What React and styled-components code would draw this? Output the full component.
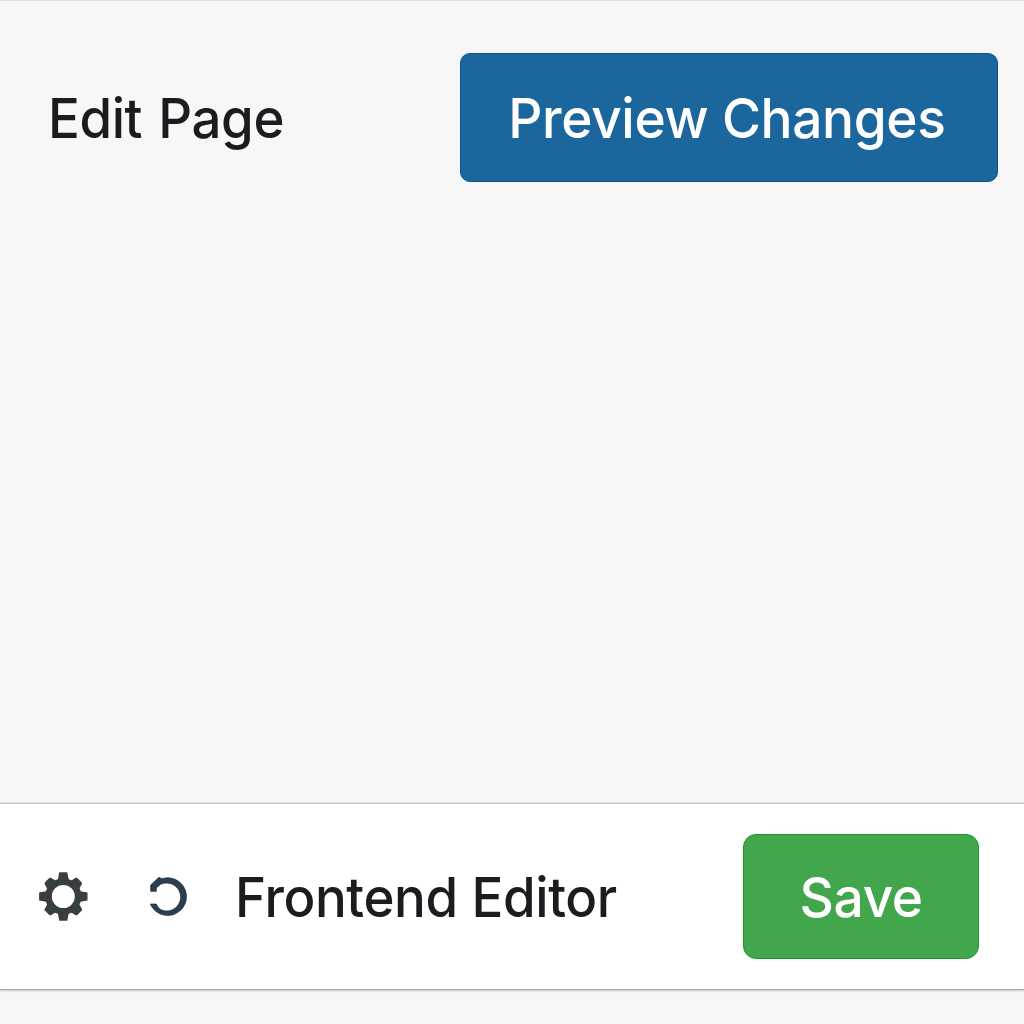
import React from 'react';
import styled, { createGlobalStyle } from 'styled-components';

const GlobalStyle = createGlobalStyle`
  * {
    box-sizing: border-box;
  }

  body {
    margin: 0;
    background: #f7f7f7;
    font-family: Inter, 'Liberation Sans', sans-serif;
  }
`;

const Page = styled.div`
  display: flex;
  flex-direction: column;
  height: 100vh;
  overflow: hidden;
  border-top: 1px solid #dedede;
  background: #f7f7f7;
`;

const Header = styled.header`
  display: flex;
  align-items: center;
  justify-content: space-between;
  height: 129px;
  margin-top: 52px;
  padding: 0 26px 0 48px;
`;

const Label = styled.span`
  display: block;
  flex: none;
  padding-top: 1px;
  font-size: 55.5px;
  font-weight: ${({ $weight }) => $weight || 450};
  line-height: 68px;
  letter-spacing: -0.4px;
  word-spacing: ${({ $gap }) => $gap || 0}px;
  white-space: nowrap;
  color: ${({ $color }) => $color || '#1b1c20'};
  transform: scaleX(${({ $stretch }) => $stretch || 0.95});
  transform-origin: ${({ $origin }) => $origin || 'left'} center;
`;

const Button = styled.button`
  display: flex;
  align-items: center;
  justify-content: center;
  flex: none;
  width: ${({ $width }) => $width}px;
  height: ${({ $height }) => $height}px;
  padding: 0 ${({ $inset }) => $inset || 0}px 0 0;
  border: 1px solid ${({ $border }) => $border};
  border-radius: ${({ $radius }) => $radius}px;
  background: ${({ $fill }) => $fill};
  font-family: inherit;
  cursor: pointer;
`;

const Canvas = styled.main`
  flex: 1;
`;

const Toolbar = styled.footer`
  display: flex;
  align-items: center;
  height: 187px;
  margin-bottom: 34px;
  padding: 0 45px 0 38px;
  border-top: 1px solid #c6c6c6;
  border-bottom: 1px solid #a9a9a9;
  background: #fff;
  box-shadow: 0 -1px 0 #e2e2e2, 0 1px 2px rgba(0, 0, 0, 0.2);
`;

const Icon = styled.svg`
  display: block;
  flex: none;
  margin-right: ${({ $gap }) => $gap}px;
`;

const Spacer = styled.div`
  flex: 1;
`;

const TEETH = [0, 45, 90, 135, 180, 225, 270, 315];

const GearIcon = () => (
  <Icon width="50" height="50" viewBox="-25.3 -24.5 50 50" $gap={61}>
    <circle r="14.8" fill="none" stroke="#383f43" strokeWidth="6.6" />
    {TEETH.map((angle) => (
      <path
        key={angle}
        d={angle % 90 ? 'M-6-16 -4.4-22 -3.4-23 3.4-23 4.4-22 6-16Z' : 'M-5.6-16 -4-24.2 4-24.2 5.6-16Z'}
        fill="#383f43"
        transform={`rotate(${angle})`}
      />
    ))}
  </Icon>
);

const ReloadIcon = () => (
  <Icon width="38" height="40" viewBox="45 36 114 120" $gap={48}>
    <path
      d="M50 79V60L75 37 84 41A56.5 56.5 0 1 1 49 117H67Q75 138 97 138A42 42 0 1 0 80 58L67 69V79Z"
      fill="#2c3e4e"
      stroke="#17273a"
      strokeWidth="2"
    />
  </Icon>
);

function App() {
  return (
    <>
      <GlobalStyle />
      <Page>
        <Header>
          <Label $gap={2.5} $stretch={0.951}>Edit Page</Label>
          <Button $width={538} $height={129} $radius={10} $inset={5} $fill="#1b679d" $border="#08558f">
            <Label $color="#fff" $weight={500} $stretch={0.959} $origin="center">Preview Changes</Label>
          </Button>
        </Header>
        <Canvas />
        <Toolbar>
          <GearIcon />
          <ReloadIcon />
          <Label $stretch={0.952}>Frontend Editor</Label>
          <Spacer />
          <Button $width={236} $height={125} $radius={13} $fill="#42a64d" $border="#1a952b">
            <Label $color="#fff" $weight={500} $stretch={0.96} $origin="center">Save</Label>
          </Button>
        </Toolbar>
      </Page>
    </>
  );
}

export default App;
